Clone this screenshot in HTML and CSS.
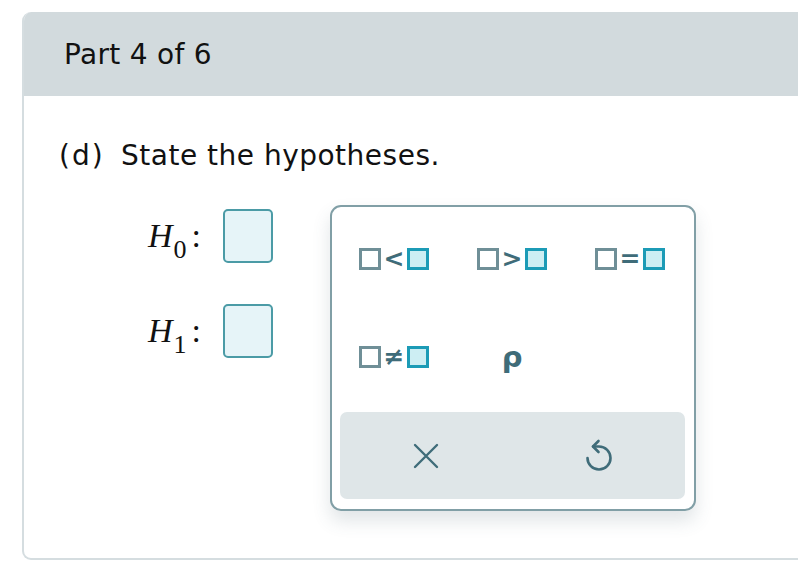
FILE: index.html
```html
<!DOCTYPE html>
<html>
<head>
<meta charset="utf-8">
<link rel="stylesheet" href="styles.css">
</head>
<body>
<div class="card">
  <div class="card-header">Part 4 of 6</div>
  <div class="card-body">
    <p class="question"><span class="qlabel">(d)</span> State the hypotheses.</p>
    <div class="work">
      <div class="hyps">
        <div class="hyp-row">
          <span class="hvar">H<sub class="hsub">0</sub></span><span class="colon">:</span>
          <span class="answer-box"></span>
        </div>
        <div class="hyp-row">
          <span class="hvar">H<sub class="hsub">1</sub></span><span class="colon">:</span>
          <span class="answer-box"></span>
        </div>
      </div>
      <div class="palette">
        <div class="palette-grid">
          <button class="pbtn"><span class="sq"></span><span class="op">&lt;</span><span class="sq fill"></span></button>
          <button class="pbtn"><span class="sq"></span><span class="op">&gt;</span><span class="sq fill"></span></button>
          <button class="pbtn"><span class="sq"></span><span class="op">=</span><span class="sq fill"></span></button>
          <button class="pbtn"><span class="sq"></span><span class="op">&ne;</span><span class="sq fill"></span></button>
          <button class="pbtn"><span class="rho">ρ</span></button>
        </div>
        <div class="palette-footer">
          <button class="fbtn" aria-label="Clear">
            <svg width="26" height="26" viewBox="0 0 26 26"><path d="M2 2 L24 24 M24 2 L2 24" fill="none" stroke="#3f6c79" stroke-width="2.4" stroke-linecap="round"/></svg>
          </button>
          <button class="fbtn" aria-label="Undo">
            <svg width="32" height="34" viewBox="0 0 32 34"><path d="M10 7.5 H16 A11.5 11.5 0 1 1 4.5 19" fill="none" stroke="#3f6c79" stroke-width="2.6" stroke-linecap="round"/><path d="M15.5 2 L10 7.5 L15.5 13" fill="none" stroke="#3f6c79" stroke-width="2.6" stroke-linecap="round" stroke-linejoin="round"/></svg>
          </button>
        </div>
      </div>
    </div>
  </div>
</div>
</body>
</html>
```
FILE: styles.css
```css
html, body {
  margin: 0;
  padding: 0;
  background: #ffffff;
  overflow: hidden;
}
body {
  font-family: "DejaVu Sans", Verdana, sans-serif;
  color: #111;
}
.card {
  margin: 12px 0 0 22px;
  width: 820px;
  height: 548px;
  box-sizing: border-box;
  border: 2px solid #d5dde0;
  border-top: none;
  border-radius: 9px;
  overflow: hidden;
}
.card-header {
  background: #d2dadd;
  height: 84px;
  box-sizing: border-box;
  display: flex;
  align-items: center;
  font-size: 28px;
  letter-spacing: 0.3px;
  color: #111;
  margin-left: -2px;
  padding-left: 42px;
}
.card-body {
  padding: 43px 0 0 35px;
}
.question {
  margin: 0;
  font-size: 28px;
  line-height: 34px;
  letter-spacing: 0.5px;
}
.qlabel {
  margin-right: 7px;
  letter-spacing: 2px;
}
.work {
  display: flex;
  align-items: flex-start;
  margin-top: 32px;
  margin-left: 89px;
}
.hyps {
  display: flex;
  flex-direction: column;
  gap: 41px;
  padding-top: 4px;
  flex-shrink: 0;
}
.hyp-row {
  display: flex;
  align-items: center;
  height: 54px;
}
.hvar {
  font-family: "Liberation Serif", "Times New Roman", serif;
  font-style: italic;
  font-size: 34px;
  line-height: 54px;
}
.hsub {
  font-style: normal;
  font-size: 26px;
  line-height: 0;
  vertical-align: -11px;
  margin-left: 1px;
}
.colon {
  font-family: "Liberation Serif", "Times New Roman", serif;
  font-size: 34px;
  line-height: 54px;
  margin-left: 5px;
}
.answer-box {
  display: block;
  flex-shrink: 0;
  width: 50px;
  height: 54px;
  box-sizing: border-box;
  margin-left: 22px;
  border: 2px solid #4b9ba6;
  border-radius: 5px;
  background: #e6f4f8;
}
.palette {
  flex-shrink: 0;
  margin-left: 57px;
  width: 366px;
  height: 306px;
  box-sizing: border-box;
  border: 2px solid #819fa6;
  border-radius: 11px;
  background: #fff;
  box-shadow: 0 10px 18px rgba(70, 95, 105, 0.16);
  display: flex;
  flex-direction: column;
}
.palette-grid {
  display: grid;
  grid-template-columns: repeat(3, 118px);
  grid-auto-rows: 98px;
  padding: 3px 4px 0 3px;
  height: 202px;
  box-sizing: border-box;
}
.pbtn {
  border: none;
  background: none;
  padding: 0;
  margin: 0;
  display: flex;
  align-items: center;
  justify-content: center;
  gap: 3px;
  font-family: "DejaVu Sans", sans-serif;
  color: #3f6c79;
}
.sq {
  display: block;
  width: 22px;
  height: 22px;
  box-sizing: border-box;
  border: 3px solid #6f8f97;
  background: #fff;
}
.sq.fill {
  border-color: #1c9bb6;
  background: #cdeef3;
}
.op {
  font-size: 25px;
  line-height: 22px;
  font-weight: bold;
  color: #3f6c79;
}
.rho {
  font-size: 29px;
  line-height: 30px;
  font-weight: bold;
  color: #3f6c79;
}
.palette-footer {
  margin: 3px 9px 0 8px;
  height: 87px;
  background: #dfe6e8;
  border-radius: 7px;
  display: grid;
  grid-template-columns: 1fr 1fr;
}
.fbtn {
  border: none;
  background: none;
  padding: 0;
  display: flex;
  align-items: center;
  justify-content: center;
}
```
